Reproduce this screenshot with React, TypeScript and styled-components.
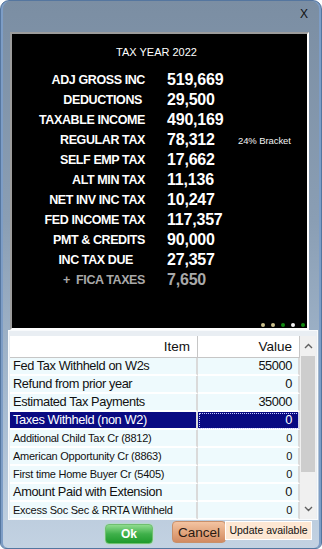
import React from 'react';
import styled, { createGlobalStyle } from 'styled-components';

const GlobalStyle = createGlobalStyle`
  html, body {
    margin: 0;
    padding: 0;
    background: #ffffff;
  }
`;

const sans = `"Liberation Sans", Arial, sans-serif`;

const Window = styled.div`
  box-sizing: border-box;
  width: 322px;
  height: 549px;
  display: flex;
  flex-direction: column;
  border: 1px solid #55769f;
  border-radius: 9px 9px 6px 6px;
  background: linear-gradient(to bottom, #7b8ea3 0%, #8a9eb4 40%, #a8bcd1 75%, #c3d2e2 100%);
  box-shadow: inset 2px 0 0 #7d9dc6, inset -2px 0 0 #7d9dc6;
  font-family: ${sans};
  overflow: hidden;
`;

const TitleBar = styled.div`
  box-sizing: border-box;
  height: 31px;
  display: flex;
  justify-content: flex-end;
  align-items: flex-start;
  padding: 6px 13px 0 0;
`;

const CloseX = styled.span`
  font-size: 12px;
  color: #111;
`;

const Body = styled.div`
  flex: 1;
  display: flex;
  flex-direction: column;
  padding: 0 3px 0 7px;
`;

const Panel = styled.div`
  box-sizing: border-box;
  height: 298px;
  margin: 0 9px 0 2px;
  background: #000;
  border: 2px solid;
  border-color: #9c9c9c #ffffff #ffffff #9c9c9c;
  display: flex;
  flex-direction: column;
  color: #fff;
`;

const PanelTitle = styled.div`
  margin-top: 11px;
  padding-right: 6px;
  text-align: center;
  font-size: 11px;
  line-height: 14px;
`;

const Summary = styled.div`
  margin-top: 11px;
  display: grid;
  grid-template-columns: 133px 71px auto;
  column-gap: 22px;
  grid-auto-rows: 20px;
  align-items: center;
`;

const Label = styled.div<{ $muted?: boolean; $shift?: number }>`
  text-align: right;
  font-weight: bold;
  font-size: 12.5px;
  letter-spacing: -0.4px;
  padding-right: ${p => p.$shift ?? 0}px;
  color: ${p => (p.$muted ? '#a9a9a9' : '#ffffff')};
  white-space: pre;
`;

const Amount = styled.div<{ $muted?: boolean }>`
  font-weight: bold;
  font-size: 16px;
  letter-spacing: -0.2px;
  color: ${p => (p.$muted ? '#a9a9a9' : '#ffffff')};
`;

const Note = styled.div`
  font-size: 9.5px;
  letter-spacing: -0.1px;
  margin-left: -22px;
  color: #f2f2f2;
`;

const Dots = styled.div`
  margin-top: auto;
  display: flex;
  justify-content: flex-end;
  gap: 6px;
  padding: 0 2px 1px 0;
`;

const Dot = styled.span<{ $color: string }>`
  width: 4px;
  height: 4px;
  border-radius: 50%;
  background: ${p => p.$color};
`;

const TableFrame = styled.div`
  box-sizing: border-box;
  height: 190px;
  display: flex;
  background: #e9eef3;
  border: 1px solid #f8fafc;
  padding: 5px 1px 0 1px;
`;

const Grid = styled.div`
  width: 290px;
  display: grid;
  grid-template-columns: 188px 102px;
  grid-template-rows: 22px;
  grid-auto-rows: 18px;
  background: #ffffff;
  overflow: hidden;
  align-content: start;
`;

const HeadCell = styled.div`
  box-sizing: border-box;
  background: #ffffff;
  border-right: 1px solid #c6c6c6;
  border-bottom: 1px solid #c6c6c6;
  font-size: 13.5px;
  color: #111;
  text-align: right;
  padding-right: 7px;
  line-height: 21px;
`;

const Cell = styled.div<{ $size: 'lg' | 'sm'; $selected?: boolean; $value?: boolean }>`
  box-sizing: border-box;
  background: ${p => (p.$selected ? '#0a0a82' : '#eefafd')};
  color: ${p => (p.$selected ? '#ffffff' : '#111111')};
  border-right: 2px solid #dadada;
  border-bottom: 2px solid #ffffff;
  font-size: ${p => (p.$size === 'lg' ? '12.8px' : '11px')};
  letter-spacing: ${p => (p.$size === 'lg' ? '-0.4px' : '-0.25px')};
  line-height: 16px;
  white-space: nowrap;
  overflow: hidden;
  text-align: ${p => (p.$value ? 'right' : 'left')};
  padding: ${p => (p.$value ? '0 6px 0 0' : '0 0 0 3px')};
  outline: ${p => (p.$selected && p.$value ? '1px dotted #c8c8ff' : 'none')};
  outline-offset: -2px;
`;

const Scrollbar = styled.div`
  width: 16px;
  display: flex;
  flex-direction: column;
  background: #f0f0f0;
`;

const ArrowBtn = styled.div`
  height: 20px;
  display: flex;
  align-items: center;
  justify-content: center;
  background: #f0f0f0;
`;

const Thumb = styled.div`
  height: 116px;
  margin: 0 1px;
  background: #cdcdcd;
`;

const Track = styled.div`
  flex: 1;
`;

const Footer = styled.div`
  flex: 1;
  display: flex;
  align-items: flex-start;
  padding: 1px 0 0 97px;
`;

const OkButton = styled.button`
  margin-top: 3px;
  width: 48px;
  height: 20px;
  border: 1px solid #6fbf6f;
  border-radius: 4px;
  background: linear-gradient(to bottom, #8fdc8f 0%, #3fb04a 50%, #1e9a2c 100%);
  color: #ffffff;
  font-family: ${sans};
  font-weight: bold;
  font-size: 12px;
  padding: 0;
  box-shadow: 0 0 2px #a8f0a8;
`;

const CancelButton = styled.button`
  margin-left: 19px;
  width: 54px;
  height: 22px;
  border: 1px solid #c9906a;
  border-radius: 4px;
  background: linear-gradient(to bottom, #f3c4a2 0%, #e2a47c 55%, #d18a62 100%);
  color: #2a1a12;
  font-family: ${sans};
  font-size: 13.5px;
  padding: 0;
`;

const UpdateTag = styled.div`
  margin-left: -1px;
  box-sizing: border-box;
  width: 87px;
  height: 19px;
  background: #fde7d3;
  border: 1px solid #ffffff;
  font-size: 10.5px;
  line-height: 17px;
  color: #111;
  text-align: center;
  white-space: nowrap;
`;

const summary = [
  { label: 'ADJ GROSS INC', amount: '519,669' },
  { label: 'DEDUCTIONS', amount: '29,500', shift: 3 },
  { label: 'TAXABLE INCOME', amount: '490,169' },
  { label: 'REGULAR TAX', amount: '78,312', note: '24% Bracket' },
  { label: 'SELF EMP TAX', amount: '17,662' },
  { label: 'ALT MIN TAX', amount: '11,136' },
  { label: 'NET INV INC TAX', amount: '10,247' },
  { label: 'FED INCOME TAX', amount: '117,357' },
  { label: 'PMT & CREDITS', amount: '90,000' },
  { label: 'INC TAX DUE', amount: '27,357', shift: 12 },
  { label: '+  FICA TAXES', amount: '7,650', muted: true },
];

const payments: { item: string; value: string; size: 'lg' | 'sm'; selected?: boolean }[] = [
  { item: 'Fed Tax Withheld on W2s', value: '55000', size: 'lg' },
  { item: 'Refund from prior year', value: '0', size: 'lg' },
  { item: 'Estimated Tax Payments', value: '35000', size: 'lg' },
  { item: 'Taxes Withheld (non W2)', value: '0', size: 'lg', selected: true },
  { item: 'Additional Child Tax Cr (8812)', value: '0', size: 'sm' },
  { item: 'American Opportunity Cr (8863)', value: '0', size: 'sm' },
  { item: 'First time Home Buyer Cr (5405)', value: '0', size: 'sm' },
  { item: 'Amount Paid with Extension', value: '0', size: 'lg' },
  { item: 'Excess Soc Sec & RRTA Withheld', value: '0', size: 'sm' },
];

const dots = ['#cbc08c', '#cbc08c', '#118a11', '#f4f4f4', '#118a11'];

const Chevron = ({ up }: { up?: boolean }) => (
  <svg width="9" height="6" viewBox="0 0 9 6">
    <polyline
      points={up ? '1,5 4.5,1.5 8,5' : '1,1 4.5,4.5 8,1'}
      fill="none"
      stroke="#606060"
      strokeWidth="1.4"
    />
  </svg>
);

const App = () => {
  return (
    <>
      <GlobalStyle />
      <Window>
        <TitleBar>
          <CloseX>X</CloseX>
        </TitleBar>
        <Body>
          <Panel>
            <PanelTitle>TAX YEAR 2022</PanelTitle>
            <Summary>
              {summary.map(row => (
                <React.Fragment key={row.label}>
                  <Label $muted={row.muted} $shift={row.shift}>{row.label}</Label>
                  <Amount $muted={row.muted}>{row.amount}</Amount>
                  <Note>{row.note ?? ''}</Note>
                </React.Fragment>
              ))}
            </Summary>
            <Dots>
              {dots.map((c, i) => (
                <Dot key={i} $color={c} />
              ))}
            </Dots>
          </Panel>
          <TableFrame>
            <Grid>
              <HeadCell>Item</HeadCell>
              <HeadCell>Value</HeadCell>
              {payments.map(p => (
                <React.Fragment key={p.item}>
                  <Cell $size={p.size} $selected={p.selected}>{p.item}</Cell>
                  <Cell $size={p.size} $selected={p.selected} $value>{p.value}</Cell>
                </React.Fragment>
              ))}
            </Grid>
            <Scrollbar>
              <ArrowBtn><Chevron up /></ArrowBtn>
              <Thumb />
              <Track />
              <ArrowBtn><Chevron /></ArrowBtn>
            </Scrollbar>
          </TableFrame>
          <Footer>
            <OkButton>Ok</OkButton>
            <CancelButton>Cancel</CancelButton>
            <UpdateTag>Update available</UpdateTag>
          </Footer>
        </Body>
      </Window>
    </>
  );
};

export default App;
